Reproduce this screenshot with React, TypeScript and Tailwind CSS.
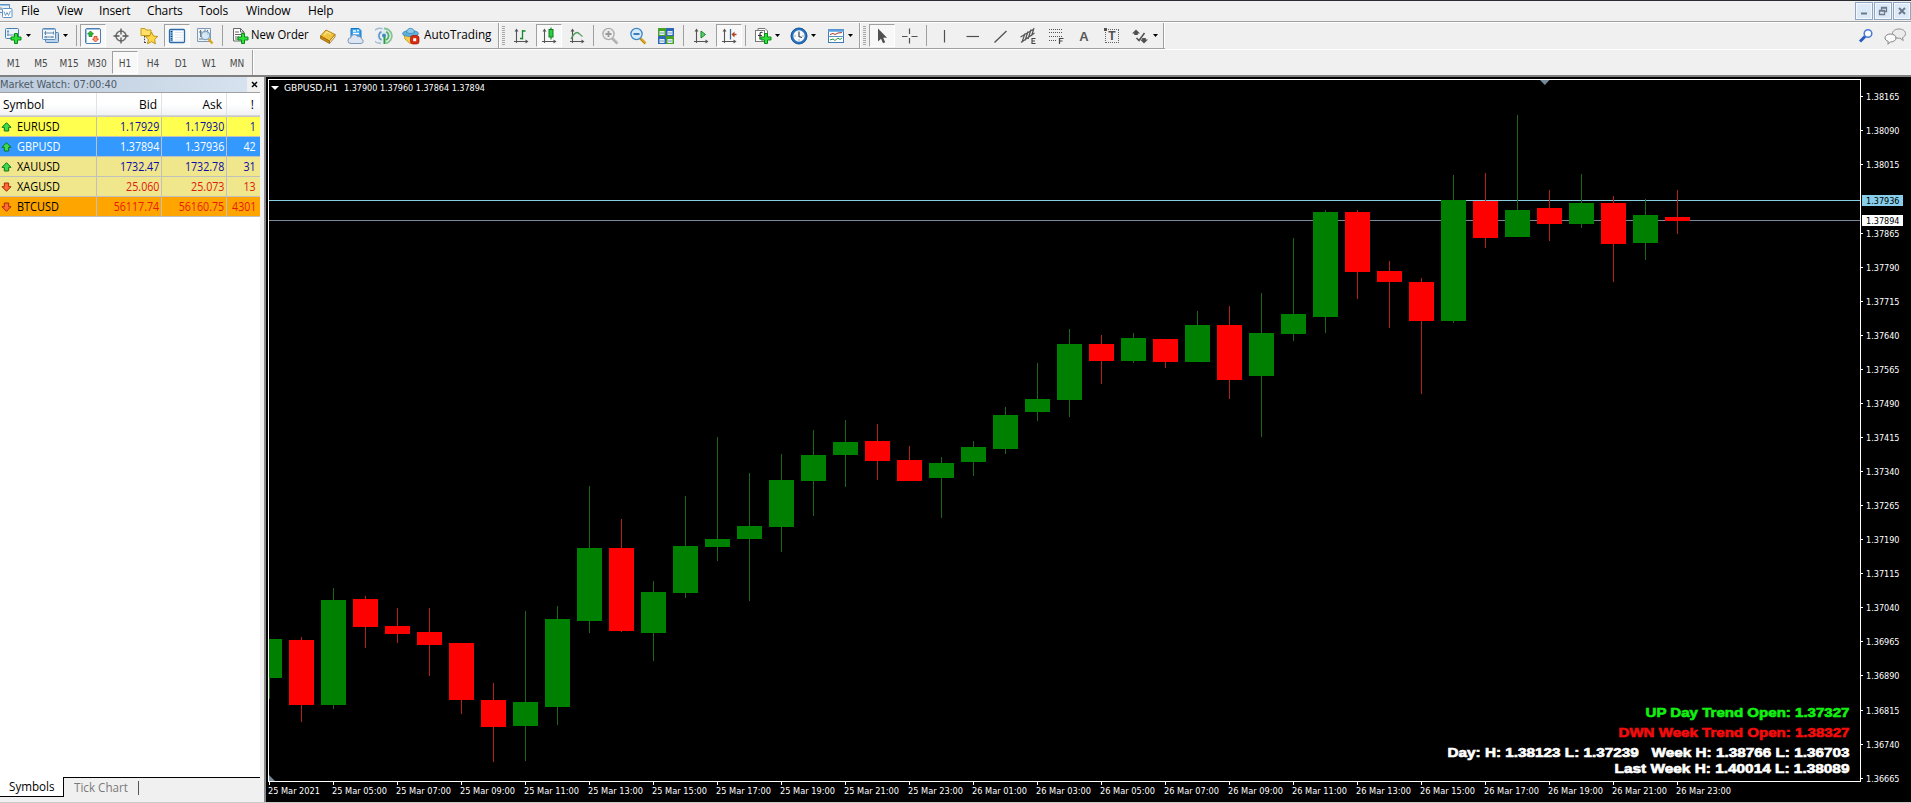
import React from 'react';

const UI = "font-['Open_Sans','Noto_Sans',sans-serif]";
const TAHOMA = "font-['DejaVu_Sans_Condensed','DejaVu_Sans',sans-serif] [font-stretch:condensed]";

type Candle = [dir: 'u' | 'd', high: number, top: number, bottom: number, low: number];

const CANDLES: Candle[] = [
  ['u', 639, 639, 678, 699],
  ['d', 637, 640, 705, 722],
  ['u', 588, 600, 705, 709],
  ['d', 596, 599, 627, 648],
  ['d', 608, 626, 634, 643],
  ['d', 608, 632, 645, 676],
  ['d', 643, 643, 700, 714],
  ['d', 683, 700, 727, 762],
  ['u', 611, 702, 726, 761],
  ['u', 606, 619, 707, 725],
  ['u', 486, 548, 621, 633],
  ['d', 519, 548, 631, 632],
  ['u', 581, 592, 633, 661],
  ['u', 496, 546, 593, 598],
  ['u', 437, 539, 547, 561],
  ['u', 473, 526, 539, 601],
  ['u', 454, 480, 527, 552],
  ['u', 430, 455, 481, 516],
  ['u', 420, 442, 455, 487],
  ['d', 424, 441, 461, 480],
  ['d', 446, 460, 481, 481],
  ['u', 457, 463, 478, 518],
  ['u', 441, 447, 462, 476],
  ['u', 407, 415, 449, 454],
  ['u', 363, 399, 412, 421],
  ['u', 329, 344, 400, 417],
  ['d', 335, 344, 361, 384],
  ['u', 333, 338, 361, 363],
  ['d', 339, 339, 362, 368],
  ['u', 311, 325, 362, 362],
  ['d', 306, 325, 380, 399],
  ['u', 293, 333, 376, 437],
  ['u', 238, 314, 334, 341],
  ['u', 210, 212, 317, 333],
  ['d', 210, 212, 272, 299],
  ['d', 261, 271, 282, 328],
  ['d', 278, 282, 321, 394],
  ['u', 175, 200, 321, 323],
  ['d', 173, 201, 238, 248],
  ['u', 115, 210, 237, 237],
  ['d', 190, 208, 224, 241],
  ['u', 174, 203, 224, 228],
  ['d', 196, 203, 244, 282],
  ['u', 199, 215, 243, 260],
  ['d', 190, 217, 221, 234],
];

const TIMES = [
  '25 Mar 2021', '25 Mar 05:00', '25 Mar 07:00', '25 Mar 09:00', '25 Mar 11:00', '25 Mar 13:00',
  '25 Mar 15:00', '25 Mar 17:00', '25 Mar 19:00', '25 Mar 21:00', '25 Mar 23:00', '26 Mar 01:00',
  '26 Mar 03:00', '26 Mar 05:00', '26 Mar 07:00', '26 Mar 09:00', '26 Mar 11:00', '26 Mar 13:00',
  '26 Mar 15:00', '26 Mar 17:00', '26 Mar 19:00', '26 Mar 21:00', '26 Mar 23:00',
];

// 1.38165 down to 1.36665, the fourth label is covered by the ask tag
const PRICES = Array.from({ length: 21 }, (_, i) => ({
  label: ((138165 - i * 75) / 100000).toFixed(5),
  y: Math.round(96.3 + i * 34.07),
})).filter((_, i) => i !== 3);

const NOTES = [
  { text: 'UP Day Trend Open: 1.37327', y: 717, width: 204, color: '#12f012' },
  { text: 'DWN Week Trend Open: 1.38327', y: 737, width: 231, color: '#f40c0c' },
  { text: 'Day: H: 1.38123 L: 1.37239\u00a0\u00a0 Week H: 1.38766 L: 1.36703', y: 757, width: 402, color: '#ffffff' },
  { text: 'Last Week H: 1.40014 L: 1.38089', y: 773, width: 235, color: '#ffffff' },
];

const Chart: React.FC = () => (
  <svg width="1645" height="725" viewBox="266 77 1645 725" className={`block bg-black ${TAHOMA}`} shapeRendering="crispEdges">
    <rect x="268" y="200" width="1592" height="1" fill="#87cee0" />
    <rect x="268" y="220" width="1592" height="1" fill="#778899" />

    {CANDLES.map(([dir, high, top, bottom, low], i) => {
      const x = 269 + i * 32;
      const left = Math.max(269, x - 12);
      return (
        <g key={i}>
          <rect x={x} y={high} width="1" height={low - high} fill={dir === 'u' ? '#1c661c' : '#b42020'} />
          <rect x={left} y={top} width={x + 13 - left} height={bottom - top} fill={dir === 'u' ? '#008000' : '#ff0000'} />
        </g>
      );
    })}

    <path d="M268 79H1861V80H268ZM268 79H269V782H268ZM1860 79H1861V782H1860ZM268 781H1861V782H268Z" fill="#fff" />
    <path d="M1540 80H1549.5L1544.8 85Z" fill="#778899" shapeRendering="auto" />
    <path d="M269 775L275 781H269Z" fill="#778899" shapeRendering="auto" />
    <path d="M271 86H279L275 90Z" fill="#fff" shapeRendering="auto" />

    <text x="284" y="91" fontSize="9" fill="#fff" textLength="54" lengthAdjust="spacingAndGlyphs">GBPUSD,H1</text>
    <text x="344" y="91" fontSize="9" fill="#fff" textLength="141" lengthAdjust="spacingAndGlyphs">1.37900 1.37960 1.37864 1.37894</text>

    {PRICES.map(({ label, y }) => (
      <g key={label}>
        <rect x="1861" y={y} width="2" height="1" fill="#fff" />
        <text x="1866" y={y + 4} fontSize="9.5" fill="#fff" textLength="33.5" lengthAdjust="spacingAndGlyphs">{label}</text>
      </g>
    ))}
    <rect x="1862" y="195" width="41" height="11" fill="#87ceeb" />
    <text x="1866" y="204" fontSize="9.5" fill="#000" textLength="33.5" lengthAdjust="spacingAndGlyphs">1.37936</text>
    <rect x="1862" y="215" width="41" height="11" fill="#fff" />
    <text x="1866" y="224" fontSize="9.5" fill="#000" textLength="33.5" lengthAdjust="spacingAndGlyphs">1.37894</text>

    {TIMES.map((time, i) => (
      <g key={time}>
        <rect x={269 + i * 64} y="782" width="1" height="3" fill="#fff" />
        <text x={268 + i * 64} y="794" fontSize="9.5" fill="#fff" textLength={i ? 55 : 52} lengthAdjust="spacingAndGlyphs">{time}</text>
      </g>
    ))}

    {NOTES.map(({ text, y, width, color }) => (
      <text
        key={text}
        x={1849.5 - width}
        y={y}
        textLength={width}
        lengthAdjust="spacingAndGlyphs"
        fill={color}
        stroke={color}
        strokeWidth="0.65"
        className="font-['Liberation_Sans',Arial,sans-serif] text-[13.5px] font-bold [font-stretch:normal]"
      >
        {text}
      </text>
    ))}
  </svg>
);

/* ---------- toolbar icons ---------- */

const Icon: React.FC<{ children: React.ReactNode; w?: number; h?: number }> = ({ children, w = 18, h = 18 }) => (
  <svg width={w} height={h} viewBox={`0 0 ${w} ${h}`} fill="none" className="block shrink-0">{children}</svg>
);

const Plus: React.FC = () => (
  <path d="M10.5 6.5h3v3.500h3.500v3h-3.500v3.500h-3v-3.500h-3.500v-3h3.500z" fill="#2fe03a" stroke="#0b8a18" />
);

const NewChartIcon = () => (
  <Icon>
    <rect x="1.5" y="1.5" width="13" height="10" rx="1" fill="#e9f3fb" stroke="#4d7fae" />
    <path d="M4 3v6M3 8h9M3 4.5h2" stroke="#6d93b5" />
    <Plus />
  </Icon>
);

const ProfilesIcon = () => (
  <Icon>
    <rect x="4.5" y="5.5" width="13" height="10" rx="1" fill="#b9d4ec" stroke="#4f82b2" />
    <rect x="1.5" y="1.5" width="13" height="11" rx="1" fill="#f1f7fc" stroke="#5d8bb8" />
    <path d="M2 2.5h12" stroke="#8db7dd" />
    <path d="M4.5 4v4M3 6h10M3 10h10M5 9v2.5M12.5 4.5v3M11 9v2" stroke="#6488a8" />
  </Icon>
);

const MarketWatchIcon = () => (
  <Icon>
    <rect x="1.5" y="1.5" width="15" height="15" rx="1.5" fill="#fff" stroke="#4b7eb0" />
    <path d="M2 2.5h14M2.5 2v14" stroke="#9cc3e6" />
    <path d="M6.5 4L9.5 7H8V9.500H5V7H3.500Z" fill="#2dbb35" stroke="#14791b" strokeWidth=".7" />
    <path d="M11.500 15L8.500 12H10V9.500H13V12H14.500Z" fill="#ff9a70" stroke="#d8351a" strokeWidth=".8" />
  </Icon>
);

const TargetIcon = () => (
  <Icon>
    <circle cx="9" cy="9" r="5" stroke="#6b6b6b" strokeWidth="1.5" />
    <path d="M9 1.5v6M9 10.5v6M1.5 9h6M10.5 9h6" stroke="#555" strokeWidth="1.3" />
  </Icon>
);

const FavoritesIcon = () => (
  <Icon>
    <path d="M1 1.5h4l1 1.5h5v5.5H1z" fill="#ffe169" stroke="#c79b1c" />
    <path d="M4.5 9v7M4.5 15.5h3" stroke="#444" strokeDasharray="1.5 1.2" />
    <path d="M11.5 5l1.9 4 4.3.5-3.1 3 .8 4.3-3.9-2.1-3.9 2.1.8-4.300-3.100-3 4.300-.5z" fill="#ffd84a" stroke="#b98a10" strokeWidth=".9" />
  </Icon>
);

const NavigatorIcon = () => (
  <Icon>
    <rect x="1.5" y="2.5" width="15" height="13" rx="1" fill="#fff" stroke="#2c6cab" strokeWidth="1.3" />
    <rect x="2" y="3" width="3" height="12" fill="#8fc0ea" />
    <path d="M3.5 4v10" stroke="#103a63" strokeWidth="1.5" strokeDasharray="1.2 1.2" />
    <path d="M7 5.5h8M7 8h8M7 10.5h8M7 13h8" stroke="#dfe8f0" />
  </Icon>
);

const DataWindowIcon = () => (
  <Icon>
    <path d="M1.5 1.5h13v13h-13z" fill="#eef3f7" stroke="#7c9ab5" />
    <path d="M4.5 3v7M3 5h3M9 2.5v4M11.5 3v5M3 12h4" stroke="#777" />
    <circle cx="9.5" cy="8.5" r="4.2" fill="#cfe6f8" fillOpacity=".8" stroke="#7fa5c8" strokeWidth="1.3" />
    <path d="M12.5 12l4 4.5" stroke="#d9a420" strokeWidth="2.4" />
  </Icon>
);

const NewOrderIcon = () => (
  <Icon>
    <path d="M2.5 1.5h7l3.5 3.5v9h-10.5z" fill="#fff" stroke="#666" />
    <path d="M9.5 1.5v3.5h3.5M4 5h4M4 7.5h6M4 10h4M4 12h3" stroke="#666" />
    <Plus />
  </Icon>
);

const BookIcon = () => (
  <Icon>
    <path d="M1.5 9L7 3l9 4.5-5.5 6.5z" fill="#f2c43e" stroke="#b98112" />
    <path d="M1.5 9v2.5l9 5V14z" fill="#c98a14" stroke="#996508" strokeWidth=".8" />
    <path d="M10.5 14L16 7.5V10l-5.5 6.5z" fill="#fff3c2" stroke="#996508" strokeWidth=".8" />
    <path d="M5 8l3-3 4 2" stroke="#fbe48d" strokeWidth="1.3" />
  </Icon>
);

const ServerIcon = () => (
  <Icon>
    <path d="M4 1.5h8l2 2V11H4z" fill="#35a3ee" stroke="#1977c2" />
    <path d="M6 4h3M6 6.5h6M10 3.5h2" stroke="#fff" strokeWidth="1.3" />
    <path d="M4 16.5a2.9 2.9 0 01-.3-5.8 3.7 3.7 0 017-1 3 3 0 013.8 2.3 2.3 2.3 0 01-.5 4.5z" fill="#dce6f2" stroke="#7f97b8" />
  </Icon>
);

const SignalIcon = () => (
  <Icon>
    <circle cx="9" cy="9" r="7.5" fill="#e3ecf2" />
    <path d="M6 16.2A7.5 7.5 0 117.5 1.7" stroke="#9ebcd6" strokeWidth="1.4" />
    <path d="M9 1.5a7.5 7.5 0 012 14.8" stroke="#86c493" strokeWidth="1.8" />
    <path d="M6.5 13a4.6 4.6 0 010-8.3" stroke="#5f94c4" strokeWidth="1.5" />
    <path d="M11 4.7a4.6 4.6 0 010 8.3" stroke="#4ead5f" strokeWidth="1.7" />
    <circle cx="9" cy="8.5" r="2" fill="#3e8bc9" />
    <path d="M9.5 9.5v7.5" stroke="#2da03c" strokeWidth="2" />
  </Icon>
);

const AutoTradingIcon = () => (
  <Icon>
    <path d="M2 7.5L15 7.5 13 14 8 16.5 3 12z" fill="#f6cf4c" stroke="#bd8c15" strokeWidth=".8" />
    <ellipse cx="8.5" cy="6.5" rx="8" ry="3" fill="#61b0dc" stroke="#3480ae" strokeWidth=".8" />
    <path d="M4.5 5.5C4.5 0 12.5 0 12.5 5.5c-2 1.3-6 1.3-8 0z" fill="#8ccbec" stroke="#3480ae" strokeWidth=".8" />
    <rect x="8.5" y="8.5" width="8.5" height="8.5" rx="2.5" fill="#d92a12" stroke="#a51505" strokeWidth=".7" />
    <rect x="11.2" y="11.2" width="3" height="3" fill="#fff" />
  </Icon>
);

const Axes: React.FC = () => (
  <>
    <path d="M4.5 3v13M2 14.5h13" stroke="#555" strokeWidth="1.1" />
    <path d="M4.5 1.5L2.5 4.5h4zM16.5 14.5L13.5 12.5v4z" fill="#555" />
  </>
);

const BarChartIcon = () => (
  <Icon>
    <Axes />
    <path d="M10.5 3v9.5M10.5 4h3M8 11.5h2.5" stroke="#12892a" strokeWidth="1.3" />
  </Icon>
);

const CandleIcon = () => (
  <Icon>
    <Axes />
    <path d="M11 .5v12" stroke="#12892a" strokeWidth="1.2" />
    <rect x="9" y="2.5" width="4" height="7.5" fill="#2ad03e" stroke="#0e7a20" />
  </Icon>
);

const LineIcon = () => (
  <Icon>
    <Axes />
    <path d="M3 12C5 8 7 5.5 9 5.5S12 8 14.5 9.5" stroke="#4e9a5b" strokeWidth="1.3" />
  </Icon>
);

const MagnifierIcon: React.FC<{ plus?: boolean }> = ({ plus }) => (
  <Icon>
    <path d="M11.5 11.5l5 5" stroke={plus ? '#b9b9b9' : '#d8a521'} strokeWidth="2.8" />
    <path d="M11 12l5 5" stroke={plus ? '#999' : '#a97508'} strokeWidth=".7" />
    <circle cx="7.5" cy="7" r="5.6" fill={plus ? '#ececec' : '#d4ebfb'} stroke={plus ? '#ababab' : '#3d83c4'} strokeWidth="1.3" />
    <path d={plus ? 'M4.5 7h6M7.5 4v6' : 'M4.5 7h6'} stroke={plus ? '#999' : '#2d6fb0'} strokeWidth="1.8" />
  </Icon>
);

const TileIcon = () => (
  <Icon>
    <path d="M1 1h8v8H1zM9 9h8v8H9z" fill="#46a324" />
    <path d="M9 1h8v8H9zM1 9h8v8H1z" fill="#2f66b8" />
    <path d="M2.500 4h5v4h-5zM10.500 4h5v4h-5zM2.500 12h5v4h-5zM10.500 12h5v4h-5z" fill="#e0eef4" />
    <path d="M3 6h4M11 6h4M3 14h4M11 14h4" stroke="#7fa4c4" />
  </Icon>
);

const AutoScrollIcon = () => (
  <Icon>
    <Axes />
    <path d="M9 4l4.500 3.500L9 11z" fill="#5bcf69" stroke="#17842a" />
  </Icon>
);

const ShiftIcon = () => (
  <Icon>
    <Axes />
    <path d="M10.5 2v10.5" stroke="#3f6a94" strokeWidth="1.3" />
    <path d="M11.5 7.5l3-3v2.200h2v1.600h-2v2.200z" fill="#b5401a" />
  </Icon>
);

const IndicatorsIcon = () => (
  <Icon>
    <path d="M4 3.5V1.5h7l2.5 2.5v8H12" fill="#fff" stroke="#777" />
    <rect x="1.5" y="3.5" width="9" height="11" fill="#fff" stroke="#777" />
    <path d="M8.5 5.5c-1.500-.6-2.500 0-2.500 1.500v5.500M4 8.500h4" stroke="#333" strokeWidth="1.2" />
    <Plus />
  </Icon>
);

const ClockIcon = () => (
  <Icon>
    <circle cx="9" cy="9" r="7" fill="#f5fafe" stroke="#2a72bd" strokeWidth="2.6" />
    <circle cx="9" cy="9" r="8" stroke="#164f8f" strokeWidth=".8" />
    <path d="M9 4.5V9.5l3 1" stroke="#444" strokeWidth="1.2" />
    <path d="M4.5 9h1M12.5 9h1M9 12.5v1" stroke="#666" />
  </Icon>
);

const TemplateIcon = () => (
  <Icon>
    <rect x="1.5" y="2.5" width="15" height="13" fill="#fff" stroke="#3f7db8" />
    <path d="M1 3.5h16" stroke="#5c9fdc" strokeWidth="2.5" />
    <path d="M1.5 9.5h15" stroke="#5c8fbe" />
    <path d="M3 7.5l3-1 2 1 3-1.500 4-.5" stroke="#a4382b" />
    <path d="M3 13l3-1 2 1.500 3-2.500 2 1.500 2-1.500" stroke="#2c9440" />
  </Icon>
);

const PointerIcon = () => (
  <Icon><path d="M5 1.5v13l3-2.800 2 4.600 2.200-1-2-4.500H14z" fill="#505050" /></Icon>
);
const CrossIcon = () => (
  <Icon><path d="M8.5 1.5v5.500M8.500 11v5.500M1 9.500h5.500M10.500 9.500h6" stroke="#505050" strokeWidth="1.2" /></Icon>
);
const VLineIcon = () => <Icon><path d="M9.5 3v12.5" stroke="#505050" strokeWidth="1.2" /></Icon>;
const HLineIcon = () => <Icon><path d="M3.5 9.5h12.5" stroke="#505050" strokeWidth="1.2" /></Icon>;
const TrendIcon = () => <Icon><path d="M3.5 15.5L15.5 4" stroke="#505050" strokeWidth="1.3" /></Icon>;

const ChannelIcon = () => (
  <Icon>
    <path d="M1.5 10L15 2M2 15.5L15.5 6M3 15L6 6.5M6 13.5L9 4.5M9 12L12 2.5M12.5 9L15 1" stroke="#555" strokeWidth="1.2" />
    <path d="M16.5 11.5h-3.500v5h3.500M13 14h3" stroke="#444" strokeWidth="1.1" />
  </Icon>
);

const FiboIcon = () => (
  <Icon>
    <path d="M2 2.5h14M2 5.5h14M2 9.5h14M2 13.5h8" stroke="#555" strokeDasharray="1 1" />
    <path d="M12.5 17v-5.500h4M12.500 14h3" stroke="#444" strokeWidth="1.2" />
  </Icon>
);

const TextIcon = () => (
  <span className="pt-px font-['Liberation_Sans',sans-serif] text-[13px] leading-none font-bold text-[#585858]">A</span>
);

const LabelIcon = () => (
  <span className="relative flex h-[14px] w-[14px] items-center justify-center border border-dotted border-[#666] font-['Liberation_Sans',sans-serif] text-[12px] leading-none font-bold text-[#505050]">
    T
    <i className="absolute -top-0.5 -left-0.5 h-[3px] w-[3px] bg-[#505050]" />
  </span>
);

const ArrowsIcon = () => (
  <Icon>
    <path d="M5 2.5L9 6.5H6.800v1.500H3.200V6.500H1z M13 16.500L9 12.500h2.200V11h3.600v1.500H17z" fill="#505050" />
    <path d="M5.5 11l2.500 2.500L13.500 6" stroke="#505050" strokeWidth="1.5" />
  </Icon>
);

const Caret: React.FC<{ className?: string }> = ({ className = '' }) => (
  <span className={`flex w-[5px] justify-center ${className}`}>
    <svg width="5" height="3" viewBox="0 0 5 3"><path d="M0 0h5L2.5 3z" fill="#000" /></svg>
  </span>
);

const Sep: React.FC<{ className?: string }> = ({ className = 'mx-0.5' }) => (
  <span className={`h-[21px] w-px shrink-0 bg-[#a0a0a0] ${className}`} />
);

const Edge: React.FC<{ className?: string }> = ({ className = '' }) => (
  <span className={`w-0.5 shrink-0 self-stretch border-l border-[#a0a0a0] bg-white ${className}`} />
);

const Grip: React.FC<{ className?: string }> = ({ className = '' }) => (
  <span className={`h-[19px] w-[3px] shrink-0 bg-[repeating-linear-gradient(180deg,#a8a8a8_0_1px,#f0f0f0_1px_2px)] ${className}`} />
);

const Tool: React.FC<{ children: React.ReactNode; pressed?: boolean; className?: string }> = ({ children, pressed, className = 'w-7' }) => (
  <span className={`flex h-full shrink-0 items-center justify-center ${className}`}>
    {pressed ? (
      <span className="flex h-[23px] w-[26px] items-center justify-center border border-t-[#a0a0a0] border-r-white border-b-white border-l-[#a0a0a0] bg-[#f8f8f8]">
        {children}
      </span>
    ) : (
      children
    )}
  </span>
);

const MENU = [
  { label: 'File', className: 'w-9' },
  { label: 'View', className: 'w-[42px]' },
  { label: 'Insert', className: 'w-[48px]' },
  { label: 'Charts', className: 'w-[52px]' },
  { label: 'Tools', className: 'w-[47px]' },
  { label: 'Window', className: 'w-[62px]' },
  { label: 'Help', className: 'w-10' },
];

const WindowButton: React.FC<{ children: React.ReactNode }> = ({ children }) => (
  <span className="flex h-[18px] w-[18px] items-center justify-center border border-[#8ea4bf] bg-[#dce9f6] shadow-[inset_0_0_0_1px_#f2f8fd]">
    <svg width="10" height="10" viewBox="0 0 10 10" fill="none">{children}</svg>
  </span>
);

const MenuBar: React.FC = () => (
  <div className="flex h-[22px] items-center border-t border-b border-t-[#2b2b33] border-b-[#a0a0a0]">
    <span className="flex w-[21px]">
      <svg width="13" height="16" viewBox="0 0 13 16" fill="none">
        <path d="M0 1.5h9.5v4M0 9.5h2" stroke="#5f93c6" />
        <path d="M0 2.5h9" stroke="#9cc4e8" />
        <path d="M1 4v3M0 6h3" stroke="#7b9fc0" />
        <rect x="2.5" y="5.5" width="9.5" height="9" rx="1" fill="#fff" stroke="#5f93c6" />
        <path d="M4 8.5l1.500 4L7 9.500l1.500 3 2-4.500" stroke="#6f9ac2" />
      </svg>
    </span>
    {MENU.map(({ label, className }) => (
      <span key={label} className={`text-[12px] leading-none tracking-[-0.15px] text-black ${className}`}>{label}</span>
    ))}
    <div className="ml-auto flex gap-px">
      <WindowButton><path d="M2 7.5h6" stroke="#6c7b8d" strokeWidth="2" /></WindowButton>
      <WindowButton>
        <path d="M3.5 4V1.5h5v4H7M3.5 2h5" stroke="#6c7b8d" strokeWidth="1.3" />
        <path d="M1.5 4.5h5v4h-5zM1.5 5h5" stroke="#6c7b8d" strokeWidth="1.3" />
      </WindowButton>
      <WindowButton><path d="M2 2l6 6M8 2L2 8" stroke="#6c7b8d" strokeWidth="2" /></WindowButton>
    </div>
  </div>
);

const Toolbar: React.FC = () => (
  <div className="flex h-[27px] border-t border-white">
    <div className="flex items-center border-b border-[#a0a0a0]">
      <Tool className="w-[25px]"><NewChartIcon /></Tool>
      <Caret className="ml-px" />
      <Tool className="ml-1.5 w-[25px]"><ProfilesIcon /></Tool>
      <Caret className="ml-px" />
      <Sep className="mr-0.5 ml-2" />
      <Tool pressed><MarketWatchIcon /></Tool>
      <Tool><TargetIcon /></Tool>
      <Tool><FavoritesIcon /></Tool>
      <Tool pressed><NavigatorIcon /></Tool>
      <Tool><DataWindowIcon /></Tool>
      <Sep className="mr-1.5 ml-[3px]" />
      <Tool className="w-[22px]"><NewOrderIcon /></Tool>
      <span className="w-[63px] pb-0.5 text-[12px] leading-none whitespace-nowrap">
        <span className="inline-block origin-left scale-x-[0.94]">New Order</span>
      </span>
      <Tool><BookIcon /></Tool>
      <Tool><ServerIcon /></Tool>
      <Tool><SignalIcon /></Tool>
      <Tool className="w-[26px]"><AutoTradingIcon /></Tool>
      <span className="w-[74px] pb-0.5 text-[12px] leading-none whitespace-nowrap">
        <span className="inline-block origin-left scale-x-[0.98]">AutoTrading</span>
      </span>
      <Edge />
      <Grip className="mr-0.5 ml-0.5" />
      <Tool><BarChartIcon /></Tool>
      <Tool pressed><CandleIcon /></Tool>
      <Tool><LineIcon /></Tool>
      <Sep />
      <Tool><MagnifierIcon plus /></Tool>
      <Tool><MagnifierIcon /></Tool>
      <Tool><TileIcon /></Tool>
      <Sep className="mr-[3px] ml-[3px]" />
      <Tool><AutoScrollIcon /></Tool>
      <Tool pressed><ShiftIcon /></Tool>
      <Sep />
      <Tool className="ml-[3px] w-6"><IndicatorsIcon /></Tool>
      <Caret />
      <Tool className="ml-[7px] w-6"><ClockIcon /></Tool>
      <Caret />
      <Tool className="ml-2 w-6"><TemplateIcon /></Tool>
      <Caret />
      <Edge className="ml-1.5" />
      <Grip className="mr-0.5 ml-0.5" />
      <Tool pressed><PointerIcon /></Tool>
      <Tool><CrossIcon /></Tool>
      <Sep className="mr-[3px] ml-0.5" />
      <Tool><VLineIcon /></Tool>
      <Tool><HLineIcon /></Tool>
      <Tool><TrendIcon /></Tool>
      <Tool><ChannelIcon /></Tool>
      <Tool><FiboIcon /></Tool>
      <Tool><TextIcon /></Tool>
      <Tool><LabelIcon /></Tool>
      <Tool className="w-[27px]"><ArrowsIcon /></Tool>
      <Caret />
      <Edge className="ml-[5px]" />
    </div>
    <div className="ml-auto flex items-center gap-2.5 pr-1">
      <svg width="16" height="16" viewBox="0 0 16 16" fill="none">
        <circle cx="10" cy="5.5" r="3.8" fill="#fff" stroke="#4a7bd0" strokeWidth="1.5" />
        <path d="M7 8.5L2 13.5" stroke="#2a5cc0" strokeWidth="3" />
      </svg>
      <svg width="23" height="17" viewBox="0 0 23 17" fill="none">
        <path d="M15 1c3.800 0 6.500 2 6.500 4.600 0 1.900-1.200 3.200-3 4l.7 3-3.200-2.400c-4.500.3-7.500-1.700-7.500-4.600C8.500 3 11 1 15 1z" fill="#ececec" stroke="#8f8f8f" />
        <path d="M6.500 6c3 0 5.500 1.600 5.500 4s-2.400 4-5.600 3.900L4 16.300l.2-2.900C2.300 12.700 1 11.500 1 10c0-2.400 2.500-4 5.500-4z" fill="#fafafa" stroke="#808080" />
      </svg>
    </div>
  </div>
);

const PERIODS = ['M1', 'M5', 'M15', 'M30', 'H1', 'H4', 'D1', 'W1', 'MN'];

const PeriodBar: React.FC = () => (
  <div className="flex h-[26px] border-t border-white">
    {PERIODS.map((period, i) => (
      <Tool key={period} pressed={period === 'H1'} className={i === 0 ? 'w-[27px]' : 'w-7'}>
        <span className={`pt-0.5 text-[10px] leading-none text-[#484848] ${TAHOMA}`}>{period}</span>
      </Tool>
    ))}
    <Edge className="ml-px" />
  </div>
);

const QUOTES = [
  { symbol: 'EURUSD', bid: '1.17929', ask: '1.17930', spread: '1', up: true, row: 'bg-[#ffff50]', text: 'text-black', value: 'text-[#0c0ca8]' },
  { symbol: 'GBPUSD', bid: '1.37894', ask: '1.37936', spread: '42', up: true, row: 'bg-[#3399ff]', text: 'text-white', value: 'text-white' },
  { symbol: 'XAUUSD', bid: '1732.47', ask: '1732.78', spread: '31', up: true, row: 'bg-[#f0e68c]', text: 'text-black', value: 'text-[#0c0ca8]' },
  { symbol: 'XAGUSD', bid: '25.060', ask: '25.073', spread: '13', up: false, row: 'bg-[#f0e68c]', text: 'text-black', value: 'text-[#dd1a10]' },
  { symbol: 'BTCUSD', bid: '56117.74', ask: '56160.75', spread: '4301', up: false, row: 'bg-[#ffa500]', text: 'text-black', value: 'text-[#e81a08]' },
];

const Value: React.FC<{ children: React.ReactNode; className: string }> = ({ children, className }) => (
  <span className={`flex h-full items-center justify-end ${className}`}>
    <span className="origin-right scale-x-[0.89]">{children}</span>
  </span>
);

const MarketWatch: React.FC = () => (
  <aside className="flex w-[264px] shrink-0 flex-col">
    <div className="flex h-[15px] items-center justify-between pr-1.5">
      <span className="flex h-full w-[247px] items-center bg-linear-to-r from-[#bccbdc] to-[#d6e2ef]">
        <span className={`text-[11px] leading-[15px] tracking-[-0.08px] whitespace-nowrap text-[#4d5a68] ${TAHOMA}`}>Market Watch: 07:00:40</span>
      </span>
      <svg width="7" height="7" viewBox="0 0 7 7"><path d="M1 1l5 5M6 1L1 6" stroke="#000" strokeWidth="1.5" /></svg>
    </div>
    <div className="flex w-[260px] flex-1 flex-col border-t border-[#a0a0a0] bg-white">
      <div className="flex h-[23px] items-center border-b border-[#d5d5d5] bg-linear-to-b from-white from-50% to-[#f1f2f4] text-[12px] leading-none">
        <span className="flex h-full w-[97px] items-center border-r border-[#e0e3e6] pt-0.5 pl-[3px]">Symbol</span>
        <span className="flex h-full w-[65px] items-center justify-end border-r border-[#e0e3e6] pt-0.5 pr-1">Bid</span>
        <span className="flex h-full w-[65px] items-center justify-end border-r border-[#e0e3e6] pt-0.5 pr-1">Ask</span>
        <span className="flex h-full flex-1 items-center justify-end pt-0.5 pr-1.5">!</span>
      </div>
      <div className="border-t border-[#c8c8c8]">
        {QUOTES.map(({ symbol, bid, ask, spread, up, row, text, value }) => (
          <div key={symbol} className={`flex h-5 items-center border-b border-[#c0c0c0] text-[12px] leading-none ${row}`}>
            <span className={`flex h-full w-[97px] items-center border-r border-[#c0c0c0] ${text}`}>
              <svg width="11" height="10" viewBox="0 0 11 10" className="mr-[5px] ml-px">
                {up ? (
                  <path d="M5.5 .7L10 5.3H7.700V9H3.300V5.300H1z" fill="#3ddc4a" stroke="#12701c" />
                ) : (
                  <path d="M5.5 9.3L1 4.700h2.300V1h4.400v3.700H10z" fill="#ff6a35" stroke="#a3280a" />
                )}
              </svg>
              <span className="origin-left scale-x-[0.91]">{symbol}</span>
            </span>
            <Value className={`w-[65px] border-r border-[#c0c0c0] pr-0.5 ${value}`}>{bid}</Value>
            <Value className={`w-[65px] border-r border-[#c0c0c0] pr-0.5 ${value}`}>{ask}</Value>
            <Value className={`flex-1 pr-1 ${value}`}>{spread}</Value>
          </div>
        ))}
      </div>
    </div>
    <div className="flex h-[25px] w-[260px] text-[12px] leading-none">
      <span className="flex h-[20px] w-[64px] items-center border-r border-b border-black bg-white pt-px pl-[9px]">
        <span className="origin-left scale-x-[0.97]">Symbols</span>
      </span>
      <span className="flex h-[20px] flex-1 items-center border-t border-black pl-[10px] text-[#7a7a7a]">
        <span className="origin-left scale-x-[0.97]">Tick Chart</span>
        <i className="ml-2 h-3.5 w-px bg-[#555]" />
      </span>
    </div>
  </aside>
);

export default function App() {
  return (
    <div className={`flex h-[803px] w-[1911px] flex-col overflow-hidden bg-[#f0f0f0] text-black ${UI}`}>
      <MenuBar />
      <Toolbar />
      <PeriodBar />
      <div className="h-0.5 bg-[#808080]" />
      <main className="flex h-[725px]">
        <MarketWatch />
        <div className="w-0.5 bg-[#8a8a8a]" />
        <Chart />
      </main>
      <div className="h-px bg-[#c8c8c8]" />
    </div>
  );
}
